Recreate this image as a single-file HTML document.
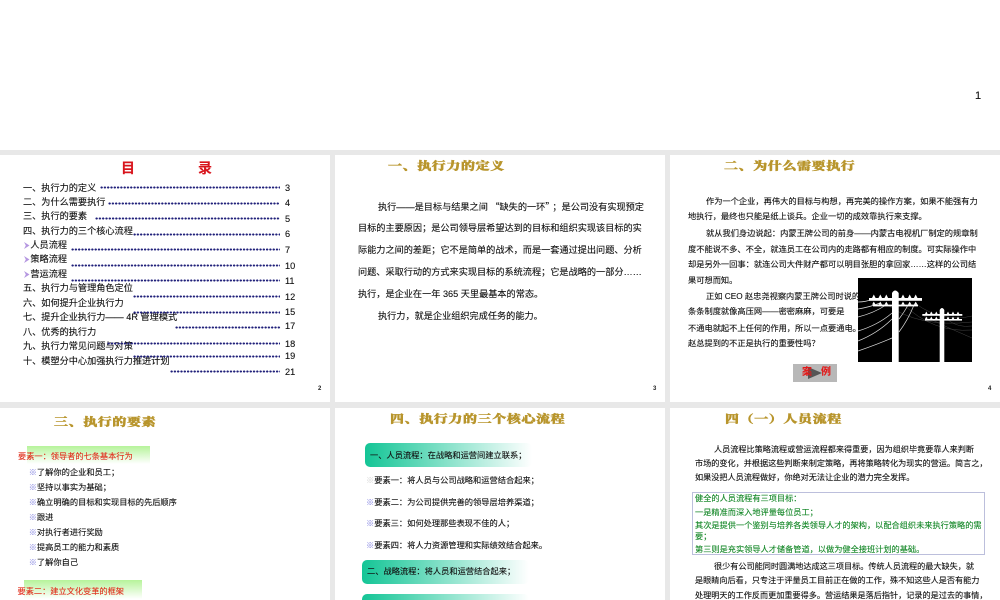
<!DOCTYPE html>
<html lang="zh"><head><meta charset="utf-8"><title>执行力</title>
<style>
html,body{margin:0;padding:0;background:#fff}
#p{position:relative;width:1000px;height:600px;overflow:hidden;background:#e8e8e8;font-family:"Liberation Sans","Noto Sans CJK SC",sans-serif;filter:blur(.35px)}
.s{position:absolute;background:#fff}
.t{position:absolute;white-space:nowrap;line-height:12px;color:#111;font-size:9.17px;-webkit-text-stroke:.12px currentColor}
.h{position:absolute;white-space:nowrap;line-height:14px;height:14px;font-family:"Liberation Serif","Noto Serif CJK SC",serif;font-weight:900;color:#b8952c;font-size:14px;letter-spacing:.6px;transform:scaleY(.78);transform-origin:left center;-webkit-text-stroke:.55px #b8952c}
.d{position:absolute;height:3px;background-image:radial-gradient(circle at 1.6px 1.5px,#20207a 1px,transparent 1.25px);background-size:3.3px 3px;background-repeat:repeat-x}
.n{position:absolute;font-weight:bold;font-size:6px;line-height:8px;color:#222}
.m{font-size:8.24px}
.q{font-family:"Noto Sans CJK SC",sans-serif}
.x{color:#9a9ae6}
.g{position:absolute;background:linear-gradient(#b6f39a,#fff)}
.b{position:absolute;border-radius:5px;background:linear-gradient(90deg,#14c596,#fff)}
.r{color:#e0301e;font-size:8.2px}
.v{color:#17892a;font-size:8.2px}
.w{font-size:8.14px}
</style></head><body><div id="p">
<div class="s" style="left:0;top:0;width:1000px;height:150px"></div>
<div class="t" style="left:975px;top:90px;font-size:11px;color:#111">1</div>

<div class="s" style="left:0;top:155px;width:330px;height:247px"></div>
<div class="s" style="left:335px;top:155px;width:330px;height:247px"></div>
<div class="s" style="left:670px;top:155px;width:330px;height:247px"></div>
<div class="s" style="left:0;top:408px;width:330px;height:192px"></div>
<div class="s" style="left:335px;top:408px;width:330px;height:192px"></div>
<div class="s" style="left:670px;top:408px;width:330px;height:192px"></div>

<!-- slide 2 -->
<div class="t" style="left:121px;top:161.500px;font-size:14px;font-weight:bold;color:#d8141c">目</div>
<div class="t" style="left:198px;top:161.500px;font-size:14px;font-weight:bold;color:#d8141c">录</div>
<div class="t" style="left:23px;top:181.7px">一、执行力的定义</div>
<div class="t" style="left:23px;top:195.7px">二、为什么需要执行</div>
<div class="t" style="left:23px;top:210.3px">三、执行的要素</div>
<div class="t" style="left:23px;top:224.7px">四、执行力的三个核心流程</div>
<svg style="position:absolute;left:24px;top:242px" width="6" height="7"><polygon points="0,0 5.5,3.5 0,7 1.800,3.500" fill="#b496e0"/></svg>
<div class="t" style="left:30.4px;top:239px">人员流程</div>
<svg style="position:absolute;left:24px;top:256px" width="6" height="7"><polygon points="0,0 5.5,3.5 0,7 1.800,3.500" fill="#b496e0"/></svg>
<div class="t" style="left:30.4px;top:253.3px">策略流程</div>
<svg style="position:absolute;left:24px;top:270.500px" width="6" height="7"><polygon points="0,0 5.5,3.5 0,7 1.800,3.500" fill="#b496e0"/></svg>
<div class="t" style="left:30.4px;top:268px">营运流程</div>
<div class="t" style="left:23px;top:282.3px">五、执行力与管理角色定位</div>
<div class="t" style="left:23px;top:297px">六、如何提升企业执行力</div>
<div class="t" style="left:23px;top:311.3px">七、提升企业执行力—— 4R 管理模式</div>
<div class="t" style="left:23px;top:326px">八、优秀的执行力</div>
<div class="t" style="left:23px;top:340.3px">九、执行力常见问题与对策</div>
<div class="t" style="left:23px;top:354.7px">十、模塑分中心加强执行力推进计划</div>
<div class="d" style="left:100px;top:186.2px;width:180px"></div>
<div class="d" style="left:108px;top:201.8px;width:171px"></div>
<div class="d" style="left:95px;top:217.2px;width:185px"></div>
<div class="d" style="left:133px;top:232.5px;width:147px"></div>
<div class="d" style="left:71px;top:248.2px;width:209px"></div>
<div class="d" style="left:71px;top:263.8px;width:209px"></div>
<div class="d" style="left:71px;top:279.2px;width:209px"></div>
<div class="d" style="left:133px;top:294.8px;width:147px"></div>
<div class="d" style="left:133px;top:310.5px;width:147px"></div>
<div class="d" style="left:175px;top:325.8px;width:106px"></div>
<div class="d" style="left:107px;top:341.8px;width:173px"></div>
<div class="d" style="left:133px;top:354.5px;width:147px"></div>
<div class="d" style="left:170px;top:370.2px;width:110px"></div>
<div class="t" style="left:285px;top:181.7px">3</div>
<div class="t" style="left:285px;top:197.3px">4</div>
<div class="t" style="left:285px;top:213px">5</div>
<div class="t" style="left:285px;top:228.3px">6</div>
<div class="t" style="left:285px;top:244px">7</div>
<div class="t" style="left:285px;top:259.7px">10</div>
<div class="t" style="left:285px;top:275px">11</div>
<div class="t" style="left:285px;top:291px">12</div>
<div class="t" style="left:285px;top:306.3px">15</div>
<div class="t" style="left:285px;top:319.7px">17</div>
<div class="t" style="left:285px;top:337.7px">18</div>
<div class="t" style="left:285px;top:350.3px">19</div>
<div class="t" style="left:285px;top:365.7px">21</div>
<div class="n" style="left:318px;top:385px">2</div>

<!-- slide 3 -->
<div class="h" style="left:388px;top:160px">一、执行力的定义</div>
<div class="t" style="left:378px;top:200px">执行——是目标与结果之间<span class="q" style="padding-left:2.500px">“</span>缺失的一环<span class="q" style="padding-right:2.500px">”</span>；是公司没有实现预定</div>
<div class="t" style="left:358px;top:222px">目标的主要原因；是公司领导层希望达到的目标和组织实现该目标的实</div>
<div class="t" style="left:358px;top:244px">际能力之间的差距；它不是简单的战术，而是一套通过提出问题、分析</div>
<div class="t" style="left:358px;top:265.6px">问题、采取行动的方式来实现目标的系统流程；它是战略的一部分……</div>
<div class="t" style="left:358px;top:288px">执行，是企业在一年 365 天里最基本的常态。</div>
<div class="t" style="left:378px;top:310px">执行力，就是企业组织完成任务的能力。</div>
<div class="n" style="left:653px;top:385px">3</div>

<!-- slide 4 -->
<div class="h" style="left:724px;top:160px">二、为什么需要执行</div>
<div class="t m" style="left:706px;top:195.7px">作为一个企业，再伟大的目标与构想，再完美的操作方案，如果不能强有力</div>
<div class="t m" style="left:688px;top:211px">地执行，最终也只能是纸上谈兵。企业一切的成效靠执行来支撑。</div>
<div class="t m" style="left:706px;top:227.7px">就从我们身边说起：内蒙王牌公司的前身——内蒙古电视机厂制定的规章制</div>
<div class="t m" style="left:688px;top:243.7px">度不能说不多、不全，就连员工在公司内的走路都有相应的制度。可实际操作中</div>
<div class="t m" style="left:688px;top:259px">却是另外一回事：就连公司大件财产都可以明目张胆的拿回家……这样的公司结</div>
<div class="t m" style="left:688px;top:274.7px">果可想而知。</div>
<div class="t m" style="left:706px;top:290.7px">正如 CEO 赵忠尧视察内蒙王牌公司时说的：</div>
<div class="t m" style="left:688px;top:306px">条条制度就像高压网——密密麻麻，可要是</div>
<div class="t m" style="left:688px;top:323px">不通电就起不上任何的作用，所以一点要通电。</div>
<div class="t m" style="left:688px;top:338px">赵总提到的不正是执行的重要性吗？</div>
<svg style="position:absolute;left:858px;top:278px" width="114" height="84" viewBox="0 0 114 84">
<rect width="114" height="84" fill="#000"/>
<g fill="none" stroke="#444" stroke-width=".5">
<path d="M28 26Q60 50 114 44M45 26Q75 55 114 52M58 26Q85 45 114 38M66 38Q90 50 114 60M90 42Q100 50 114 48"/>
</g>
<g fill="none" stroke="#ddd" stroke-width=".7">
<path d="M0 24Q8 24 15 21M0 31Q12 29 22 25M0 39Q16 35 28 27M0 53Q20 47 34 35M0 63Q20 55 34 41M0 73Q20 66 34 60M41 41Q47 33 50 27M41 54Q50 42 56 27"/>
</g>
<g fill="#fff">
<path d="M34 84V15Q37 10 40.7 15V84Z"/>
<rect x="11" y="20" width="53" height="2.8"/><rect x="15" y="26.6" width="45" height="1.8"/>
<path d="M14 20l1.800-3.500 1.800 3.500zM20.500 20l1.800-3.500 1.800 3.500zM26.500 20l1.800-3.500 1.800 3.500zM43.200 20l1.800-3.500 1.800 3.500zM49.900 20l1.800-3.500 1.800 3.500zM55.900 20l1.800-3.500 1.800 3.500z"/>
<path d="M14 26.600l1.800-3 1.800 3zM20.500 26.600l1.800-3 1.800 3zM26.500 26.600l1.800-3 1.800 3zM43.200 26.600l1.800-3 1.800 3zM49.900 26.600l1.800-3 1.800 3zM55.900 26.600l1.800-3 1.800 3z"/>
<path d="M81.700 84V32Q84 28 86.300 32V84Z"/>
<rect x="64.300" y="36" width="40" height="1.8"/><rect x="67" y="41" width="37" height="1.6"/>
<path d="M67 36l1.300-2.500 1.300 2.500zM72 36l1.300-2.500 1.300 2.500zM77 36l1.300-2.500 1.300 2.500zM88.700 36l1.300-2.500 1.300 2.500zM93.700 36l1.300-2.500 1.300 2.500zM98.700 36l1.300-2.500 1.300 2.500z"/>
<path d="M67 41l1.300-2.500 1.300 2.500zM72 41l1.300-2.500 1.300 2.500zM77 41l1.300-2.500 1.300 2.500zM88.700 41l1.300-2.500 1.300 2.500zM93.700 41l1.300-2.500 1.300 2.500zM98.700 41l1.300-2.500 1.300 2.500z"/>
</g></svg>
<div style="position:absolute;left:793px;top:364px;width:44px;height:18px;background:#b8b8b8"></div>
<svg style="position:absolute;left:808px;top:367px" width="15" height="12"><polygon points="0,0 14,6 0,12" fill="#555"/></svg>
<div class="t" style="left:802px;top:367px;font-size:10px;font-weight:bold;color:#e21818">案</div>
<div class="t" style="left:821px;top:367px;font-size:10px;font-weight:bold;color:#e21818">例</div>
<div class="n" style="left:988px;top:385px">4</div>

<!-- slide 5 -->
<div class="h" style="left:54px;top:415.700px">三、执行的要素</div>
<div class="g" style="left:27px;top:445.700px;width:123px;height:18.500px"></div>
<div class="t r" style="left:18px;top:451px">要素一：领导者的七条基本行为</div>
<div class="t m" style="left:28.700px;top:467.300px"><span class="x">※</span>了解你的企业和员工；</div>
<div class="t m" style="left:28.700px;top:482px"><span class="x">※</span>坚持以事实为基础；</div>
<div class="t m" style="left:28.700px;top:497px"><span class="x">※</span>确立明确的目标和实现目标的先后顺序</div>
<div class="t m" style="left:28.700px;top:512px"><span class="x">※</span>跟进</div>
<div class="t m" style="left:28.700px;top:527px"><span class="x">※</span>对执行者进行奖励</div>
<div class="t m" style="left:28.700px;top:542px"><span class="x">※</span>提高员工的能力和素质</div>
<div class="t m" style="left:28.700px;top:557px"><span class="x">※</span>了解你自己</div>
<div class="g" style="left:24.300px;top:580.300px;width:118px;height:18.700px"></div>
<div class="t r" style="left:17.500px;top:585.700px">要素二：建立文化变革的框架</div>

<!-- slide 6 -->
<div class="h" style="left:390px;top:413px">四、执行力的三个核心流程</div>
<div class="b" style="left:365px;top:443px;width:167px;height:24px"></div>
<div class="t m" style="left:370px;top:450px">一、人员流程：在战略和运营间建立联系；</div>
<div class="t m" style="left:366px;top:475px"><span style="color:#ddd">※</span>要素一：将人员与公司战略和运营结合起来；</div>
<div class="t m" style="left:366px;top:497px"><span class="x">※</span>要素二：为公司提供完善的领导层培养渠道；</div>
<div class="t m" style="left:366px;top:518.300px"><span class="x">※</span>要素三：如何处理那些表现不佳的人；</div>
<div class="t m" style="left:366px;top:540px"><span class="x">※</span>要素四：将人力资源管理和实际绩效结合起来。</div>
<div class="b" style="left:362px;top:560px;width:167px;height:23.500px"></div>
<div class="t m" style="left:367px;top:566px">二、战略流程：将人员和运营结合起来；</div>
<div class="b" style="left:362px;top:593.500px;width:167px;height:24px"></div>

<!-- slide 7 -->
<div class="h" style="left:725px;top:413px">四（一）人员流程</div>
<div class="t w" style="left:714px;top:444px">人员流程比策略流程或营运流程都来得重要，因为组织毕竟要靠人来判断</div>
<div class="t w" style="left:695px;top:458px">市场的变化，并根据这些判断来制定策略，再将策略转化为现实的营运。简言之，</div>
<div class="t w" style="left:695px;top:472px">如果没把人员流程做好，你绝对无法让企业的潜力完全发挥。</div>
<div style="position:absolute;left:692px;top:492px;width:291px;height:61px;border:1px solid #bcbfdc"></div>
<div class="t v" style="left:695px;top:492.500px">健全的人员流程有三项目标：</div>
<div class="t v" style="left:695px;top:506.500px">一是精准而深入地评量每位员工；</div>
<div class="t v" style="left:695px;top:520px">其次是提供一个鉴别与培养各类领导人才的架构，以配合组织未来执行策略的需</div>
<div class="t v" style="left:695px;top:530.500px">要；</div>
<div class="t v" style="left:695px;top:544px">第三则是充实领导人才储备管道，以做为健全接班计划的基础。</div>
<div class="t w" style="left:714px;top:561px">很少有公司能同时圆满地达成这三项目标。传统人员流程的最大缺失，就</div>
<div class="t w" style="left:695px;top:575px">是眼睛向后看，只专注于评量员工目前正在做的工作，殊不知这些人是否有能力</div>
<div class="t w" style="left:695px;top:590px">处理明天的工作反而更加重要得多。营运结果是落后指针，记录的是过去的事情，</div>
</div></body></html>
